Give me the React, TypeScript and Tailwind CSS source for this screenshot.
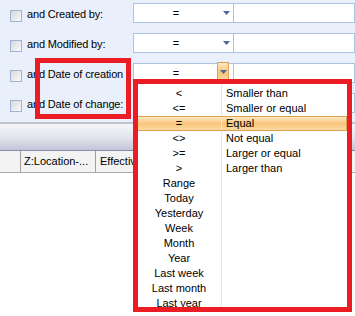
import React from "react";

const font = { fontFamily: '"Liberation Sans", Arial, sans-serif' };

function Checkbox() {
  return (
    <div className="ml-[10px] mt-[10px] w-[12px] h-[12px] border border-[#9fb3d6] bg-gradient-to-br from-[#d8d8dc] to-[#fbfbfb] shrink-0" />
  );
}

function Arrow() {
  return (
    <svg width="7" height="4" viewBox="0 0 7 4" className="block">
      <path d="M0 0H7L3.5 4Z" fill="#4b6aa0" />
    </svg>
  );
}

function Row({ label, hot }: { label: string; hot?: boolean }) {
  return (
    <div className="flex h-[30px] items-start">
      <Checkbox />
      <div className="ml-[5px] mt-[7px] w-[106px] leading-[15px] text-[11px] tracking-[-0.15px] text-black whitespace-nowrap">
        {label}
      </div>
      <div className="mt-[3px] h-[20px] w-[101px] border border-[#adc1e3] bg-white flex items-center relative">
        <div className="w-[84px] text-center text-[11px] leading-[15px] text-black">=</div>
        {hot ? (
          <div className="absolute left-[83px] top-[-2px] w-[12px] h-[20px] border border-[#d9a35c] bg-gradient-to-b from-[#fde7bf] via-[#f9c679] to-[#fcd89d] flex items-center justify-center">
            <Arrow />
          </div>
        ) : (
          <div className="ml-[5px]">
            <Arrow />
          </div>
        )}
      </div>
      <div className="mt-[3px] h-[20px] flex-1 -ml-px border border-[#adc1e3] bg-white" />
    </div>
  );
}

const ops: [string, string][] = [
  ["<", "Smaller than"],
  ["<=", "Smaller or equal"],
  ["=", "Equal"],
  ["<>", "Not equal"],
  [">=", "Larger or equal"],
  [">", "Larger than"],
  ["Range", ""],
  ["Today", ""],
  ["Yesterday", ""],
  ["Week", ""],
  ["Month", ""],
  ["Year", ""],
  ["Last week", ""],
  ["Last month", ""],
  ["Last year", ""],
];

export default function App() {
  return (
    <div className="relative w-[355px] h-[316px] overflow-hidden bg-white" style={font}>
      {/* filter panel */}
      <div className="h-[122px] bg-[#e9effb] flex flex-col">
        <Row label="and Created by:" />
        <Row label="and Modified by:" />
        <Row label="and Date of creation" hot />
        <Row label="and Date of change:" />
      </div>
      <div className="h-[2px] bg-[#c3c3cc]" />
      {/* splitter band */}
      <div className="h-[26px] bg-gradient-to-b from-[#f6f6fa] via-[#e4e4ee] to-[#c4c4d8]" />
      <div className="h-px bg-[#8c8ca6]" />
      {/* column header */}
      <div className="h-[22px] flex bg-[#f3f3f3] border-b border-[#a8a8a8] text-[11px] text-black">
        <div className="w-[21px] border-r border-[#a0a0a0]" />
        <div className="w-[75px] border-r border-[#a0a0a0] pl-[3px] flex items-center whitespace-nowrap overflow-hidden">
          Z:Location-...
        </div>
        <div className="flex-1 pl-[4px] flex items-center whitespace-nowrap overflow-hidden">
          Effective date
        </div>
      </div>

      {/* dropdown popup */}
      <div className="absolute left-[137px] top-[83px] w-[210px] h-[224px] bg-white overflow-hidden">
        <div className="absolute left-[84px] top-0 bottom-0 w-px bg-[#e6e6ee]" />
        <div className="mt-[3px] flex flex-col">
          {ops.map(([a, b], i) => (
            <div
              key={i}
              className={
                "relative h-[15px] flex items-center text-[11px] leading-[13px] text-black " +
                (i === 2
                  ? "border border-[#dba050] bg-gradient-to-b from-[#fee8c4] via-[#f9c57a] to-[#fcd9a2]"
                  : "")
              }
            >
              {i === 2 && <div className="absolute left-[83px] top-0 bottom-0 w-px bg-[#f6e6cf]" />}
              <div className={"w-[84px] text-center whitespace-nowrap " + (i === 2 ? "-ml-px" : "")}>{a}</div>
              <div className="pl-[5px] whitespace-nowrap">{b}</div>
            </div>
          ))}
        </div>
      </div>

      {/* red annotation boxes */}
      <div className="absolute left-[35px] top-[58px] w-[96px] h-[61px] border-[5px] border-[#ec1c24]" />
      <div className="absolute left-[133px] top-[79px] w-[219px] h-[233px] border-[5px] border-[#ec1c24]" />
    </div>
  );
}
